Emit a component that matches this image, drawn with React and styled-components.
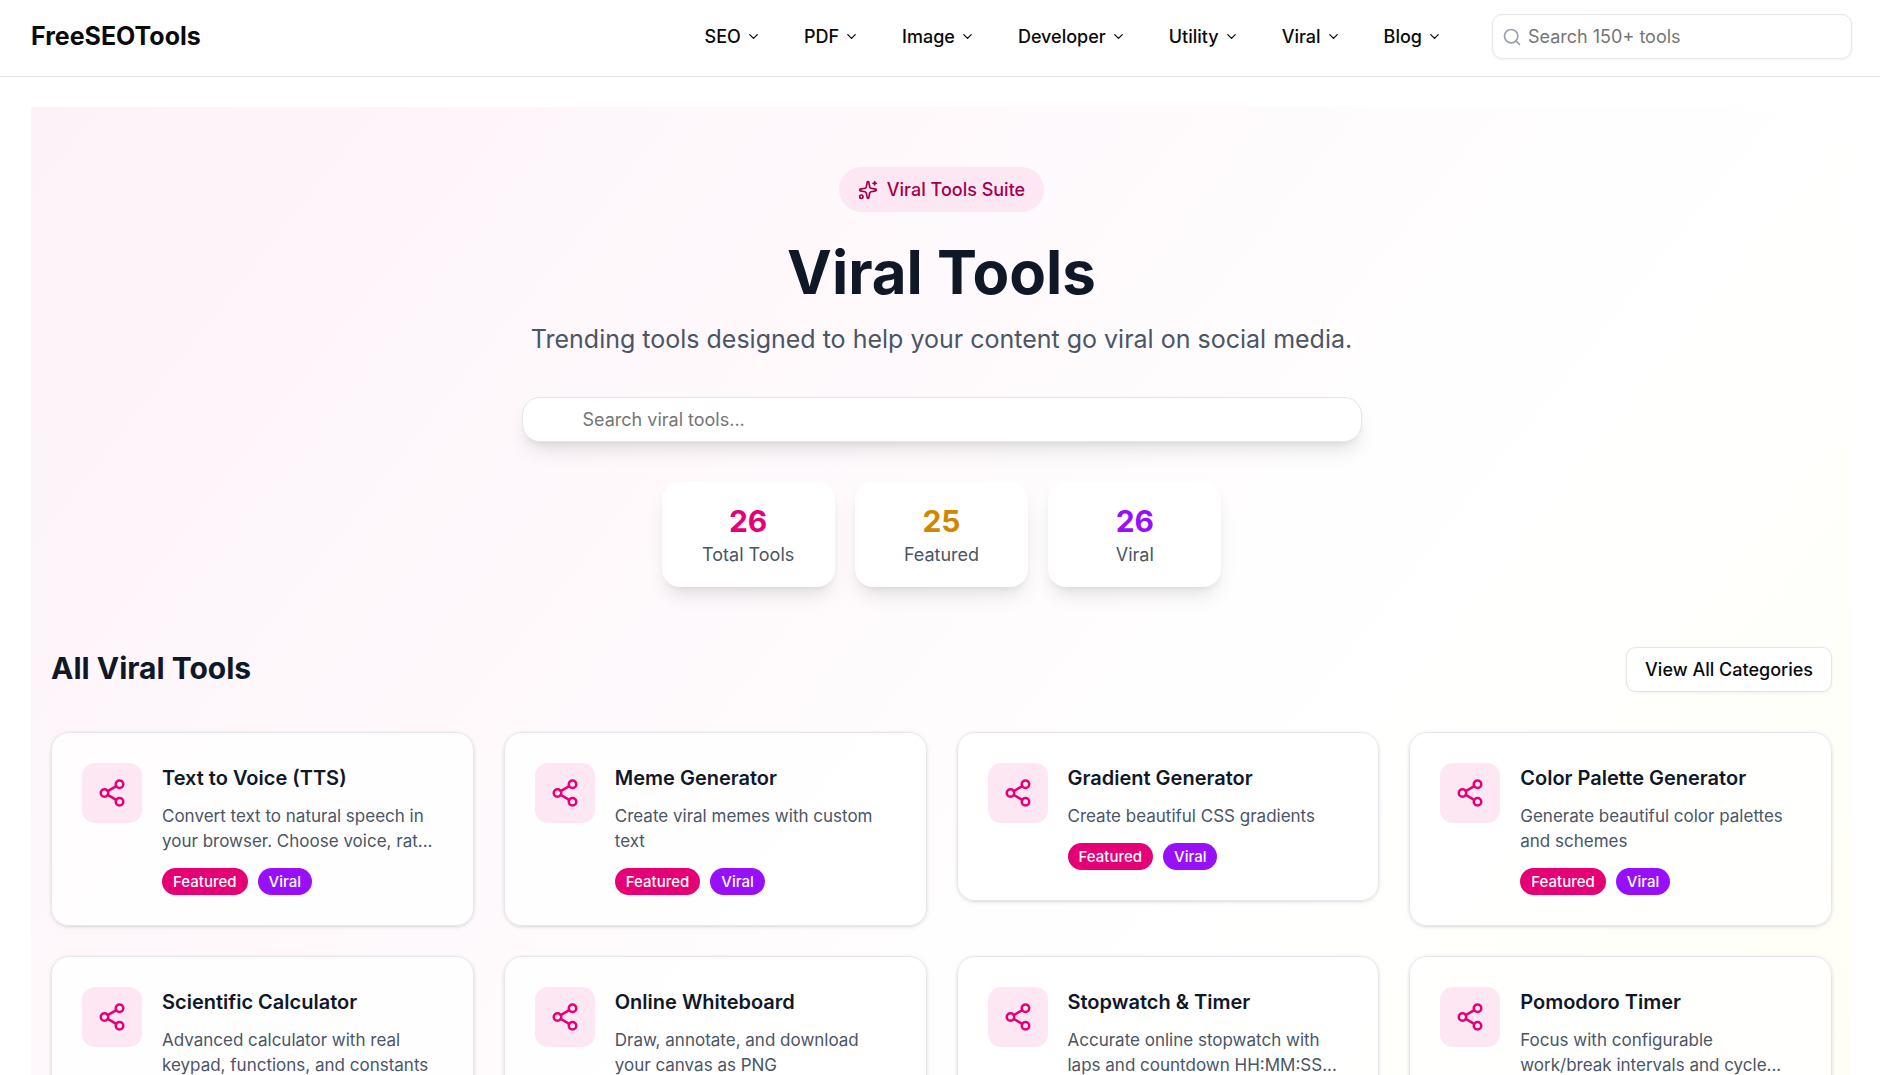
import React, { useState } from 'react';
import styled, { createGlobalStyle } from 'styled-components';
import { ChevronDown, Search, Share2, Sparkles } from 'lucide-react';

const GlobalStyle = createGlobalStyle`
  *, *::before, *::after {
    box-sizing: border-box;
  }
  body {
    margin: 0;
    background: #fff;
    color: #0a0a0a;
    font-family: Inter, "Liberation Sans", sans-serif;
    font-size: 18px;
    line-height: 25px;
  }
  button, input {
    font: inherit;
    color: inherit;
  }
`;

const Header = styled.header`
  display: flex;
  align-items: center;
  justify-content: space-between;
  padding: 14px 28px 17px 31px;
  background: #fff;
  border-bottom: 1px solid #e5e5e5;
`;

const Logo = styled.a`
  font-size: 25px;
  font-weight: 700;
  line-height: 35px;
  color: inherit;
  text-decoration: none;
`;

const HeaderRight = styled.div`
  display: flex;
  align-items: center;
  gap: 30px;
`;

const Nav = styled.nav`
  display: flex;
  gap: 3px;
`;

const NavButton = styled.button`
  display: flex;
  align-items: center;
  gap: 5px;
  height: 45px;
  padding: 0 20px;
  border: 0;
  border-radius: 10px;
  background: transparent;
  font-weight: 500;
  cursor: pointer;
  &:hover {
    background: #f5f5f5;
  }
`;

const HeaderSearch = styled.label`
  display: flex;
  align-items: center;
  gap: 6px;
  width: 360px;
  height: 45px;
  padding: 0 9px;
  border: 1px solid #e5e5e5;
  border-radius: 10px;
  box-shadow: 0 1px 3px rgba(0, 0, 0, 0.06);
  svg {
    flex: none;
    color: #99a1af;
  }
`;

const HeaderInput = styled.input`
  flex: 1;
  min-width: 0;
  padding: 0;
  border: 0;
  outline: none;
  background: transparent;
  &::placeholder {
    color: #757575;
  }
`;

const Main = styled.main`
  padding: 30px 28px 0 31px;
`;

const Page = styled.div`
  padding: 60px 20px;
  background: linear-gradient(to bottom right, #fdf2f8, #fff, #fefce8) no-repeat;
  background-size: 100% 2300px;
`;

const Hero = styled.section`
  display: flex;
  flex-direction: column;
  align-items: center;
  margin-bottom: 60px;
  text-align: center;
`;

const HeroBadge = styled.div`
  display: flex;
  align-items: center;
  gap: 9px;
  padding: 10px 19px;
  margin-bottom: 30px;
  border-radius: 23px;
  background: #fce7f3;
  color: #a3004c;
  font-weight: 500;
`;

const Title = styled.h1`
  margin: 0 0 20px;
  font-size: 60px;
  font-weight: 700;
  line-height: 60px;
  color: #101828;
`;

const Subtitle = styled.p`
  margin: 0 0 40px;
  font-size: 25px;
  line-height: 35px;
  color: #4a5565;
`;

const HeroInput = styled.input`
  width: 100%;
  max-width: 840px;
  height: 45px;
  padding: 0 20px 0 60px;
  margin-bottom: 40px;
  border: 1px solid #e5e5e5;
  border-radius: 18px;
  outline: none;
  background: #fff;
  box-shadow: 0 12px 19px -4px rgba(0, 0, 0, 0.1), 0 5px 8px -5px rgba(0, 0, 0, 0.1);
  &::placeholder {
    color: #757575;
  }
`;

const Stats = styled.div`
  display: grid;
  grid-template-columns: repeat(3, 1fr);
  gap: 20px;
  width: 100%;
  max-width: 560px;
`;

const Stat = styled.div`
  padding: 20px;
  border-radius: 18px;
  background: #fff;
  box-shadow: 0 12px 19px -4px rgba(0, 0, 0, 0.1), 0 5px 8px -5px rgba(0, 0, 0, 0.1);
`;

const StatValue = styled.div`
  margin-bottom: 2px;
  font-size: 30px;
  font-weight: 700;
  line-height: 38px;
  color: ${(props) => props.$color};
`;

const StatLabel = styled.div`
  color: #4a5565;
`;

const SectionHead = styled.div`
  display: flex;
  align-items: flex-start;
  justify-content: space-between;
  margin-bottom: 40px;
`;

const SectionTitle = styled.h2`
  margin: 0;
  font-size: 30px;
  font-weight: 700;
  line-height: 42px;
  color: #101828;
`;

const OutlineButton = styled.button`
  height: 45px;
  padding: 0 18px;
  border: 1px solid #e5e5e5;
  border-radius: 10px;
  background: #fff;
  box-shadow: 0 1px 3px rgba(0, 0, 0, 0.06);
  font-weight: 500;
  cursor: pointer;
`;

const Grid = styled.div`
  display: grid;
  grid-template-columns: repeat(auto-fill, minmax(380px, 1fr));
  align-items: start;
  gap: 30px;
`;

const Card = styled.a`
  display: flex;
  gap: 20px;
  padding: 30px;
  border: 1px solid #e5e7eb;
  border-radius: 18px;
  background: rgba(255, 255, 255, 0.8);
  box-shadow: 0 1px 4px rgba(0, 0, 0, 0.1), 0 1px 3px -1px rgba(0, 0, 0, 0.1);
  color: inherit;
  text-decoration: none;
`;

const IconTile = styled.div`
  display: flex;
  flex: none;
  align-items: center;
  justify-content: center;
  width: 60px;
  height: 60px;
  border-radius: 13px;
  background: #fce7f3;
  color: #e60076;
`;

const CardBody = styled.div`
  min-width: 0;
`;

const CardTitle = styled.h3`
  margin: 0 0 11px;
  font-size: 20px;
  font-weight: 600;
  line-height: 30px;
  color: #101828;
`;

const CardText = styled.p`
  margin: 0 0 14px;
  font-size: 17px;
  color: #4a5565;
`;

const Tags = styled.div`
  display: flex;
  gap: 10px;
`;

const Tag = styled.span`
  padding: 1px 11px;
  border-radius: 14px;
  background: ${(props) => props.$color};
  color: #fff;
  font-size: 15px;
  font-weight: 500;
`;

const menu = ['SEO', 'PDF', 'Image', 'Developer', 'Utility', 'Viral', 'Blog'];

const stats = [
  { value: 26, label: 'Total Tools', color: '#e60076' },
  { value: 25, label: 'Featured', color: '#d08700' },
  { value: 26, label: 'Viral', color: '#9810fa' },
];

const tools = [
  {
    name: 'Text to Voice (TTS)',
    text: 'Convert text to natural speech in your browser. Choose voice, rat...',
  },
  { name: 'Meme Generator', text: 'Create viral memes with custom text' },
  { name: 'Gradient Generator', text: 'Create beautiful CSS gradients' },
  {
    name: 'Color Palette Generator',
    text: 'Generate beautiful color palettes and schemes',
  },
  {
    name: 'Scientific Calculator',
    text: 'Advanced calculator with real keypad, functions, and constants',
  },
  {
    name: 'Online Whiteboard',
    text: 'Draw, annotate, and download your canvas as PNG',
  },
  {
    name: 'Stopwatch & Timer',
    text: 'Accurate online stopwatch with laps and countdown HH:MM:SS...',
  },
  {
    name: 'Pomodoro Timer',
    text: 'Focus with configurable work/break intervals and cycle...',
  },
];

const App = () => {
  const [query, setQuery] = useState('');

  const list = tools
    .filter((tool) => tool.name.toLowerCase().includes(query.toLowerCase()))
    .map((tool) => (
      <Card href="#" key={tool.name}>
        <IconTile>
          <Share2 size={30} />
        </IconTile>
        <CardBody>
          <CardTitle>{tool.name}</CardTitle>
          <CardText>{tool.text}</CardText>
          <Tags>
            <Tag $color="#e60076">Featured</Tag>
            <Tag $color="#9810fa">Viral</Tag>
          </Tags>
        </CardBody>
      </Card>
    ));

  return (
    <>
      <GlobalStyle />
      <Header>
        <Logo href="#">FreeSEOTools</Logo>
        <HeaderRight>
          <Nav>
            {menu.map((item) => (
              <NavButton key={item}>
                {item}
                <ChevronDown size={15} />
              </NavButton>
            ))}
          </Nav>
          <HeaderSearch>
            <Search size={20} />
            <HeaderInput placeholder="Search 150+ tools" aria-label="Search tools" />
          </HeaderSearch>
        </HeaderRight>
      </Header>
      <Main>
        <Page>
          <Hero>
            <HeroBadge>
              <Sparkles size={20} />
              Viral Tools Suite
            </HeroBadge>
            <Title>Viral Tools</Title>
            <Subtitle>
              Trending tools designed to help your content go viral on social media.
            </Subtitle>
            <HeroInput
              value={query}
              placeholder="Search viral tools..."
              aria-label="Search viral tools"
              onChange={(e) => setQuery(e.target.value)}
            />
            <Stats>
              {stats.map((stat) => (
                <Stat key={stat.label}>
                  <StatValue $color={stat.color}>{stat.value}</StatValue>
                  <StatLabel>{stat.label}</StatLabel>
                </Stat>
              ))}
            </Stats>
          </Hero>
          <SectionHead>
            <SectionTitle>All Viral Tools</SectionTitle>
            <OutlineButton>View All Categories</OutlineButton>
          </SectionHead>
          <Grid>{list}</Grid>
        </Page>
      </Main>
    </>
  );
};

export default App;
